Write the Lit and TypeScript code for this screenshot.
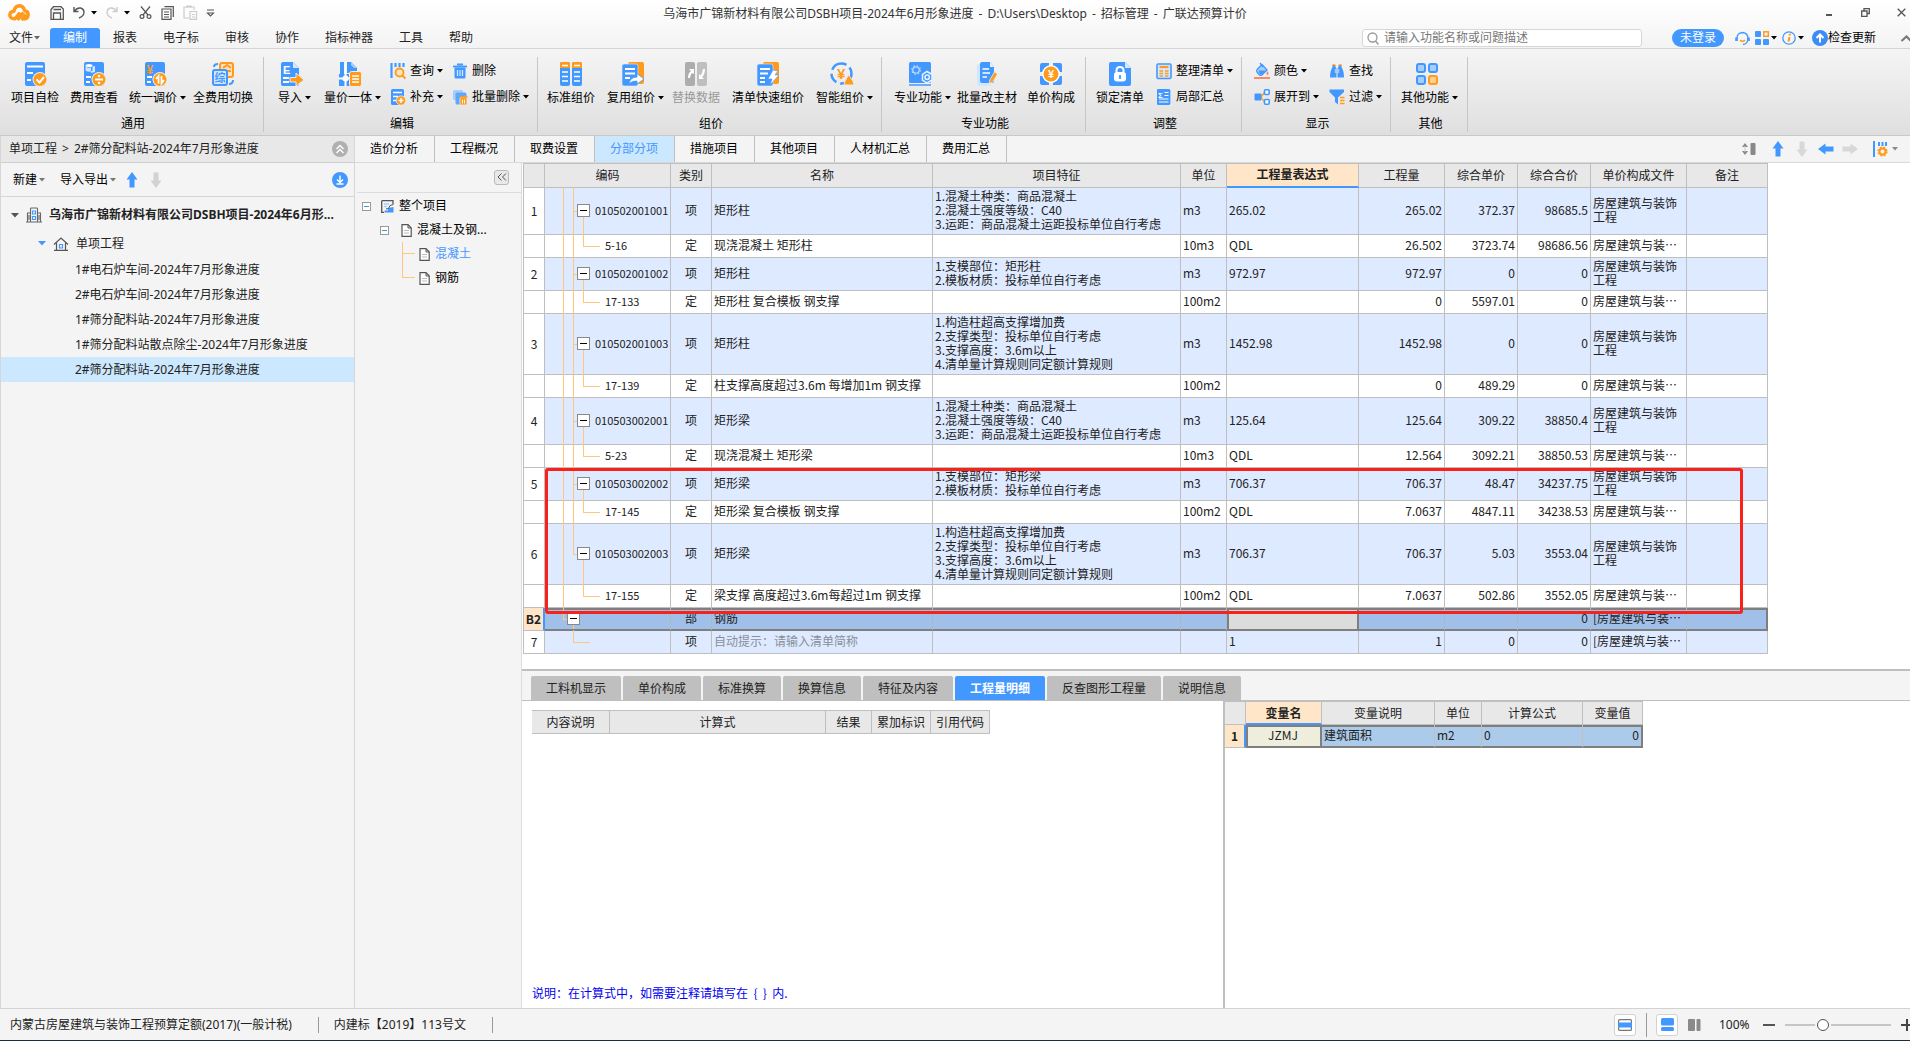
import { LitElement, html, svg, css, nothing, TemplateResult } from "lit";
import { customElement } from "lit/decorators.js";
import { classMap } from "lit/directives/class-map.js";

const B = "#4398ff";
const O = "#ff9a1a";
const L = "#a6cdfb";
const BG = "#ececec";

/* ---------- icons ---------- */
const doc = svg`<rect x="1" y="0" width="20" height="24" rx="2" fill=${B}/>`;
const badge = svg`<circle cx="16" cy="17.5" r="7.5" fill=${BG}/><circle cx="16" cy="17.5" r="6.5" fill=${O}/>`;

const icons: Record<string, TemplateResult> = {
  check: svg`<g transform="translate(1 0)">${doc}<path d="M3 4.5H19M3 11H9M3 18H7" stroke="#fff" stroke-width="2"/>${badge}<path d="M12.500 17.500L15.500 20.500L20 15" fill="none" stroke="#fff" stroke-width="2"/></g>`,
  fee: svg`<g transform="translate(1 0)">${doc}<ellipse cx="6" cy="3.500" rx="3.500" ry="1.500" fill="#fff"/><path d="M2.500 4.500v4q3.500 2.500 7 0v-4q-3.500 2.500 -7 0zM8 5l4-1v6l-4 1z" fill="#cfe4ff"/><path d="M3 15H8M3 20H7" stroke="#fff" stroke-width="2"/>${badge}<path d="M12 17.500h8" stroke="#fff" stroke-width="2"/><circle cx="16" cy="14" r="1.300" fill="#fff"/><circle cx="16" cy="21" r="1.300" fill="#fff"/></g>`,
  adjust: svg`<g transform="translate(1 0)">${doc}<text x="2.500" y="11.500" font-size="12" font-weight="700" fill=${O} font-family="Liberation Sans, sans-serif">¥</text><path d="M3 15H8M3 20H7" stroke="#fff" stroke-width="2"/>${badge}<path d="M14.500 21.500V14L12 17M17.500 14v7.500L20 18" fill="none" stroke="#fff" stroke-width="1.800"/></g>`,
  swap: svg`<rect x="9" y="1" width="13" height="14" rx="2" fill="#ffe2bd" stroke=${O} stroke-width="2"/><path d="M12 6l4-3 4 3M13 9h7" fill="none" stroke=${O} stroke-width="2"/><path d="M3 5q0-3 4-3M22 18q0 4-4 4" fill="none" stroke=${B} stroke-width="2"/><rect x="2" y="8" width="14" height="15" rx="2" fill="#d5e8ff" stroke=${B} stroke-width="2"/><text x="3.500" y="19.500" font-size="11" font-weight="700" fill=${B} font-family="Noto Sans CJK SC, sans-serif">综</text>`,
  import: svg`<path d="M3 0H13L19 6V22q0 2-2 2H3q-2 0-2-2V2q0-2 2-2z" fill=${B}/><path d="M13 0L19 6H13z" fill="#d5e8ff"/><text x="3" y="12" font-size="11" font-weight="700" fill="#fff" font-family="Liberation Sans, sans-serif">E</text><path d="M3 16H9M3 20H9" stroke="#fff" stroke-width="2"/><path d="M10 15.500H16V11L24 18L16 24V20H10z" fill=${O} stroke=${BG} stroke-width="1"/>`,
  unify: svg`<path d="M2 0H6V24H2zM9 0h4l6 6v5H9z" fill=${B}/><path d="M13 0l6 6h-3l-3-3z" fill=${L}/><rect x="1" y="12" width="20" height="12" fill=${B}/><path d="M7.500 0V24M1 16.500H12" stroke="#fff" stroke-width="2"/><circle cx="7.500" cy="16.500" r="3" fill="#fff"/><rect x="11.500" y="9.500" width="12" height="15" rx="2" fill=${O} stroke=${BG}/><path d="M14 14H21M14 17H21M14 20H21" stroke="#fff" stroke-width="1.500"/>`,
  std: svg`<rect x="1" y="0" width="10" height="24" rx="2" fill=${B}/><rect x="13" y="0" width="10" height="24" rx="2" fill=${B}/><path d="M1 6V2q0-2 2-2h6q2 0 2 2V6zM13 6V2q0-2 2-2h6q2 0 2 2V6z" fill=${O}/><path d="M3 3.500H9M15 3.500H21M3 10H9M15 10H21M3 14.500H9M15 14.500H21M3 19H9M15 19H21" stroke="#fff" stroke-width="1.500"/>`,
  reuse: svg`<rect x="7" y="0" width="16" height="22" rx="2" fill=${O}/><rect x="1" y="2" width="16" height="22" rx="2" fill=${B} stroke=${BG} stroke-width=".6"/><path d="M4 7H14M4 11.500H14M4 16H9" stroke="#fff" stroke-width="1.800"/><path d="M8 22q1-7 8-7V11.500L23 17L16 22V19q-5-.5-8 3z" fill="#fff" stroke=${B} stroke-width=".8"/>`,
  replace: svg`<rect x="1" y="0" width="10" height="24" rx="2" fill="#adadad"/><rect x="13" y="0" width="10" height="24" rx="2" fill="#bfbfbf"/><path d="M4 16q0-5 3-7L5 7H10V12L8 11q-2 2-2 5zM21 7q0 5-3 8l2 2H15V12l1.500 1.500q2-2 2.500-6.500z" fill="#fff"/>`,
  quick: svg`<rect x="7" y="0" width="16" height="22" rx="2" fill=${O}/><rect x="1" y="2" width="16" height="22" rx="2" fill=${B} stroke=${BG} stroke-width=".6"/><path d="M4 7H14M4 11.500H12M4 16H9M4 20H9" stroke="#fff" stroke-width="1.800"/><path d="M17 8L22 9L19 13H23L14 23L16 17H12z" fill="#fff" stroke=${B} stroke-width=".6"/>`,
  smart: svg`<circle cx="11.500" cy="11.500" r="10" fill="none" stroke=${B} stroke-width="2.500" stroke-dasharray="17 4 10 4"/><text x="7" y="17" font-size="15" font-weight="700" fill=${O} font-family="Liberation Sans, sans-serif">¥</text><path d="M18.500 13l2 2.500q2.500 3 3.500 6.500q0 1-1 1H15q-1 0-1-1 1-3.500 3-6.500z" fill=${O} stroke=${BG}/>`,
  pro: svg`<rect x="1" y="0" width="22" height="21" rx="1.500" fill=${B}/><path d="M1 23H23" stroke=${B} stroke-width="1.500"/><circle cx="8" cy="8" r="3.200" fill="none" stroke="#b9d9ff" stroke-width="1.300"/><circle cx="8" cy="8" r="4.300" fill="none" stroke="#b9d9ff" stroke-width="1.200" stroke-dasharray="1.500 1.900"/><path d="M19 9.500L24 12.500V18L19 21L14.500 18V12.500z" fill=${B} stroke="#e9f3ff" stroke-width="1.500"/><circle cx="19.200" cy="15.200" r="2.200" fill="none" stroke="#e9f3ff" stroke-width="1.500"/>`,
  material: svg`<rect x="2" y="2" width="14" height="22" rx="2" fill="#cfe6ff"/><path d="M7 0H15L19 5V19q0 2-2 2H7q-2 0-2-2V2q0-2 2-2z" fill=${B}/><path d="M15 0L19 5H15z" fill="#e4f1ff"/><path d="M7.500 7H14M7.500 11H15M7.500 15H12" stroke="#fff" stroke-width="1.600"/><path d="M14 22l1-4.500L19.500 10l3 2-4.500 7.500z" fill=${O} stroke=${BG} stroke-width=".8"/>`,
  compose: svg`<path d="M1 3q0-2 2-2h7v9H1zM23 3q0-2-2-2h-7v9h9zM1 21q0 2 2 2h7v-9H1zM23 21q0 2-2 2h-7v-9h9z" fill=${B}/><circle cx="12" cy="12" r="9" fill="#fff"/><circle cx="12" cy="12" r="7.500" fill=${O}/><text x="8.900" y="16" font-size="11" font-weight="700" fill="#fff" font-family="Liberation Sans, sans-serif">¥</text>`,
  lock: svg`<path d="M3 0H17L23 6V22q0 2-2 2H3q-2 0-2-2V2q0-2 2-2z" fill=${B}/><path d="M17 0L23 6H17z" fill="#d5e8ff"/><path d="M8.500 11V8.500q0-3.500 3.500-3.500t3.500 3.500V11" fill="none" stroke="#fff" stroke-width="2"/><rect x="6" y="10" width="12" height="9.500" rx="3" fill="#fff"/><path d="M12 13v4" stroke=${B} stroke-width="1.800"/>`,
  more: svg`<g stroke-width="2" fill=${L} stroke=${B}><rect x="2" y="2" width="8" height="8" rx="2"/><rect x="14" y="2" width="8" height="8" rx="2"/><rect x="2" y="14" width="8" height="8" rx="2"/></g><rect x="14" y="14" width="8" height="8" rx="2" fill="#ffcf92" stroke=${O} stroke-width="2"/>`,
};

const smallIcons: Record<string, TemplateResult> = {
  query: svg`<path d="M1.500 0v15M5.500 0v4M9.500 0v4M13.500 0v4" stroke=${B} stroke-width="2.200"/><circle cx="9.500" cy="9.500" r="4" fill="#ffe3c0" stroke=${O} stroke-width="1.800"/><path d="M12 12.500l3.500 3" stroke=${O} stroke-width="2"/>`,
  add: svg`<rect x="1" y="0" width="13" height="16" rx="1.500" fill=${B}/><path d="M3 3.500H12M3 7.500H8M3 11.500H6" stroke="#fff" stroke-width="1.500"/><circle cx="11" cy="11.500" r="5" fill=${BG}/><circle cx="11" cy="11.500" r="4.300" fill=${O}/><path d="M11 9v5M8.500 11.500h5" stroke="#fff" stroke-width="1.500"/>`,
  trash: svg`<path d="M1 3.500H15" stroke=${B} stroke-width="1.800"/><path d="M5 1.500H11" stroke=${B} stroke-width="2"/><path d="M2.500 4.500H13.500V14q0 1.500-1.500 1.500H4q-1.500 0-1.500-1.500z" fill=${B}/><path d="M5.500 7v6M8 7v6M10.500 7v6" stroke="#d9eaff" stroke-width="1.200"/>`,
  trashes: svg`<rect x="1" y="1" width="10" height="10" rx="1.500" fill=${L}/><rect x="3.500" y="3.500" width="11" height="12" rx="1.500" fill="#5ea8fb"/><rect x="8" y="8.500" width="7" height="7.500" rx="1" fill=${O} stroke=${BG} stroke-width=".8"/><path d="M7.500 8H15.500" stroke=${O} stroke-width="1.500"/><path d="M10.500 10.500v4M12.500 10.500v4" stroke="#fff" stroke-width=".9"/>`,
  tidy: svg`<rect x="1" y="1" width="14" height="14.500" rx="1" fill="#d3e7ff" stroke=${B} stroke-width="1.600"/><path d="M3.500 4H12.500" stroke=${O} stroke-width="2.200"/><path d="M3.500 8H7M3.500 10.500H7M3.500 13H7M9 8H12.500M9 10.500H12.500M9 13H12.500" stroke=${O} stroke-width="1.300"/>`,
  sum: svg`<rect x="1" y="0" width="13" height="16" rx="1" fill=${B}/><path d="M14.500 1v14" stroke=${L} stroke-width="1"/><text x="2" y="8.500" font-size="8" font-weight="700" fill="#fff" font-family="Liberation Sans, sans-serif">Σ</text><path d="M8.500 3.500H12.500M8.500 6.500H12.500M3 10H12.500M3 13H12.500" stroke="#fff" stroke-width="1.200"/>`,
  color: svg`<path d="M3.500 6L8 1.500L13 7L8 12Q6.500 13 5 11.500L3 9Q2 7.500 3.500 6z" fill=${L} stroke=${B} stroke-width="1.300"/><path d="M4.500 7.500H12L8 11.500H6z" fill=${B}/><path d="M6 0l3 4" stroke=${B} stroke-width="1.300"/><path d="M13.500 8q2 3 0 4-2-1 0-4z" fill="#ff7d55"/><path d="M0 15H16" stroke="#ff7d55" stroke-width="1.800"/>`,
  find: svg`<path d="M3.500 2H6.500V4l1 1.500V14.500H1Q1 8 3.500 4zM12.500 2H9.500V4l-1 1.500V14.500H15Q15 8 12.500 4z" fill=${B}/><path d="M5.800 6h4.400v4h-4.400z" fill=${L}/><path d="M3.300 2h3M9.700 2h3" stroke=${O} stroke-width="1.500"/>`,
  expand: svg`<path d="M7 8L10.500 3.500M7 8L10.500 13" stroke=${O} stroke-width="1.300"/><rect x="0.500" y="4.500" width="7" height="7" rx="1" fill=${B}/><rect x="10.500" y="0.800" width="4.700" height="4.700" rx="1" fill="#fff" stroke=${B} stroke-width="1.600"/><rect x="10.500" y="10.500" width="4.700" height="4.700" rx="1" fill="#fff" stroke=${B} stroke-width="1.600"/>`,
  filter: svg`<path d="M0.500 0.500H15V3L9 8.500V15.500L6 13V8.500L0.500 3z" fill=${B}/><path d="M11 8.500H15.500M11 11.500H15.500M11 14.500H15.500" stroke=${O} stroke-width="1.500"/>`,
};

const big = (k: string) => html`<svg class="i24" viewBox="0 0 24 24" aria-hidden="true">${icons[k]}</svg>`;
const small = (k: string) => html`<svg class="i16" viewBox="0 0 16 16" aria-hidden="true">${smallIcons[k]}</svg>`;
const icon = (w: number, h: number, body: unknown) =>
  html`<svg width=${w} height=${h} viewBox="0 0 ${w} ${h}" fill="none" aria-hidden="true">${body}</svg>`;
const caret = html`<svg class="caret" width="6" height="4" viewBox="0 0 6 4" aria-hidden="true"><path d="M0 0H6L3 3.500z" fill="currentColor"/></svg>`;

const arrowShape = (dir: number, color: string) =>
  icon(16, 16, svg`<path transform="rotate(${dir} 8 8)" d="M8 0L13.500 7.500H10.500V15.500H5.500V7.500H2.500z" fill=${color}/>`);
const sheet = icon(11, 13, svg`<path d="M1 .700H7L10.200 4V12.300H1z" fill="#fff" stroke="#555" stroke-width="1.200"/><path d="M7 .700V4h3.200" stroke="#555"/><path d="M3 6.500H8M3 9H8" stroke="#bbb"/>`);

/* ---------- data ---------- */
type Btn = { t: string; i: string; a?: boolean; off?: boolean };
type Group = { name: string; cls: string; large: Btn[]; cols: Btn[][] };

const groups: Group[] = [
  { name: "通用", cls: "g1", large: [{ t: "项目自检", i: "check" }, { t: "费用查看", i: "fee" }, { t: "统一调价", i: "adjust", a: true }, { t: "全费用切换", i: "swap" }], cols: [] },
  { name: "编辑", cls: "g2", large: [{ t: "导入", i: "import", a: true }, { t: "量价一体", i: "unify", a: true }], cols: [[{ t: "查询", i: "query", a: true }, { t: "补充", i: "add", a: true }], [{ t: "删除", i: "trash" }, { t: "批量删除", i: "trashes", a: true }]] },
  { name: "组价", cls: "g3", large: [{ t: "标准组价", i: "std" }, { t: "复用组价", i: "reuse", a: true }, { t: "替换数据", i: "replace", off: true }, { t: "清单快速组价", i: "quick" }, { t: "智能组价", i: "smart", a: true }], cols: [] },
  { name: "专业功能", cls: "g4", large: [{ t: "专业功能", i: "pro", a: true }, { t: "批量改主材", i: "material" }, { t: "单价构成", i: "compose" }], cols: [] },
  { name: "调整", cls: "g5", large: [{ t: "锁定清单", i: "lock" }], cols: [[{ t: "整理清单", i: "tidy", a: true }, { t: "局部汇总", i: "sum" }]] },
  { name: "显示", cls: "g6", large: [], cols: [[{ t: "颜色", i: "color", a: true }, { t: "展开到", i: "expand", a: true }], [{ t: "查找", i: "find" }, { t: "过滤", i: "filter", a: true }]] },
  { name: "其他", cls: "g7", large: [{ t: "其他功能", i: "more", a: true }], cols: [] },
];

const menus = ["编制", "报表", "电子标", "审核", "协作", "指标神器", "工具", "帮助"];
const tabs = ["造价分析", "工程概况", "取费设置", "分部分项", "措施项目", "其他项目", "人材机汇总", "费用汇总"];
const lowerTabs = ["工料机显示", "单价构成", "标准换算", "换算信息", "特征及内容", "工程量明细", "反查图形工程量", "说明信息"];
const columns: [string, number][] = [["", 22], ["编码", 126], ["类别", 41], ["名称", 221], ["项目特征", 248], ["单位", 46], ["工程量表达式", 132], ["工程量", 86], ["综合单价", 73], ["综合合价", 73], ["单价构成文件", 96], ["备注", 81]];

type Row = { n: string; code: string; kind: string; name: string; feat: string[]; v: string[] };
const F = "房屋建筑与装饰工程";
const S = "房屋建筑与装…";
const concrete = ["1.混凝土种类：商品混凝土", "2.混凝土强度等级：C40", "3.运距：商品混凝土运距投标单位自行考虑"];
const tall = ["1.构造柱超高支撑增加费", "2.支撑类型：投标单位自行考虑", "3.支撑高度：3.6m以上", "4.清单量计算规则同定额计算规则"];
const rows: Row[] = [
  { n: "1", code: "010502001001", kind: "项", name: "矩形柱", feat: concrete, v: ["m3", "265.02", "265.02", "372.37", "98685.5", F] },
  { n: "", code: "5-16", kind: "定", name: "现浇混凝土 矩形柱", feat: [], v: ["10m3", "QDL", "26.502", "3723.74", "98686.56", S] },
  { n: "2", code: "010502001002", kind: "项", name: "矩形柱", feat: ["1.支模部位：矩形柱", "2.模板材质：投标单位自行考虑"], v: ["m3", "972.97", "972.97", "0", "0", F] },
  { n: "", code: "17-133", kind: "定", name: "矩形柱 复合模板 钢支撑", feat: [], v: ["100m2", "", "0", "5597.01", "0", S] },
  { n: "3", code: "010502001003", kind: "项", name: "矩形柱", feat: tall, v: ["m3", "1452.98", "1452.98", "0", "0", F] },
  { n: "", code: "17-139", kind: "定", name: "柱支撑高度超过3.6m 每增加1m 钢支撑", feat: [], v: ["100m2", "", "0", "489.29", "0", S] },
  { n: "4", code: "010503002001", kind: "项", name: "矩形梁", feat: concrete, v: ["m3", "125.64", "125.64", "309.22", "38850.4", F] },
  { n: "", code: "5-23", kind: "定", name: "现浇混凝土 矩形梁", feat: [], v: ["10m3", "QDL", "12.564", "3092.21", "38850.53", S] },
  { n: "5", code: "010503002002", kind: "项", name: "矩形梁", feat: ["1.支模部位：矩形梁", "2.模板材质：投标单位自行考虑"], v: ["m3", "706.37", "706.37", "48.47", "34237.75", F] },
  { n: "", code: "17-145", kind: "定", name: "矩形梁 复合模板 钢支撑", feat: [], v: ["100m2", "QDL", "7.0637", "4847.11", "34238.53", S] },
  { n: "6", code: "010503002003", kind: "项", name: "矩形梁", feat: tall, v: ["m3", "706.37", "706.37", "5.03", "3553.04", F] },
  { n: "", code: "17-155", kind: "定", name: "梁支撑 高度超过3.6m每超过1m 钢支撑", feat: [], v: ["100m2", "QDL", "7.0637", "502.86", "3552.05", S] },
  { n: "B2", code: "", kind: "部", name: "钢筋", feat: [], v: ["", "", "", "", "0", "[" + S] },
  { n: "7", code: "", kind: "项", name: "自动提示：请输入清单简称", feat: [], v: ["", "1", "1", "0", "0", "[" + S] },
];

const base = css`
  *, *::before, *::after { box-sizing: border-box; }
  button, input { font: inherit; color: inherit; margin: 0; }
  button { border: 0; padding: 0; background: none; white-space: nowrap; display: flex; align-items: center; }
  a { color: inherit; text-decoration: none; }
  svg { display: block; flex: none; overflow: visible; }
  .caret { margin-left: 3px; }
`;

/* ---------- header: title bar, menu and ribbon ---------- */
@customElement("app-header")
export class AppHeader extends LitElement {
  static styles = [base, css`
    :host { display: block; flex: none; background: linear-gradient(#fff, #f3f3f3 49px); }
    .title { display: grid; grid-template-columns: 1fr auto 1fr; align-items: center; height: 28px; }
    .title h1 { display: flex; gap: 5px; margin: 0; font-size: 12px; font-weight: 400; color: #333; white-space: nowrap; }
    .quick { display: flex; align-items: center; padding: 0 0 3px 8px; color: #555; }
    .quick .logo { margin-right: 20px; }
    .quick button { margin-right: 9px; }
    .quick .caret { margin-left: 6px; color: #000; }
    .faint { color: #ccc; }
    .win { display: flex; justify-content: flex-end; gap: 27px; padding: 0 4px 3px 0; color: #555; }
    .menu { display: flex; align-items: center; height: 20px; }
    .menu nav { display: flex; height: 20px; }
    .menu nav button { padding: 0 13px; height: 20px; color: #222; }
    .menu nav .file { width: 50px; padding: 0 0 0 9px; }
    .menu nav .file .caret { margin-left: 1px; color: #666; }
    .menu nav .on { background: #4398ff; color: #fff; border-radius: 3px 3px 0 0; }
    .right { margin-left: auto; display: flex; align-items: center; }
    .search { display: flex; align-items: center; gap: 5px; width: 280px; height: 18px; margin-right: 30px; padding-left: 4px; background: #fff; border: 1px solid #d6d6d6; border-radius: 3px; }
    .search input { flex: 1; min-width: 0; border: 0; padding: 0; outline: 0; background: none; color: #444; height: 16px; }
    .search input::placeholder { color: #777; opacity: 1; }
    .login { background: #4398ff; color: #fff; border-radius: 9px; height: 18px; padding: 0 8px; margin-right: 11px; }
    .tool { margin-right: 5px; }
    .tool .caret { margin-left: 2px; }
    .update { margin: 0 25px 0 3px; color: #000; }
    .ribbon { display: flex; height: 88px; background: linear-gradient(#f5f5f5, #dfdfdf); border-top: 1px solid #d4d4d4; border-bottom: 1px solid #c9c9c9; color: #000; }
    .group { position: relative; display: flex; flex-direction: column; }
    .group::after { content: ""; position: absolute; right: 0; top: 8px; bottom: 3px; width: 1px; background: #c6c6c6; }
    .group h2 { margin: 0; font-size: 12px; line-height: 16px; font-weight: 400; text-align: center; padding: 4px 0 0 2px; }
    .cmds { display: flex; height: 63px; padding-top: 13px; }
    .large { flex-direction: column; padding: 0 5px; gap: 4px; height: 44px; }
    .large.arrow { padding-right: 1px; }
    .large.arrow .i24 { margin-right: 5px; }
    .large .lab, .mini .lab { display: flex; align-items: center; line-height: 16px; }
    .mini { gap: 4px; height: 18px; }
    .col { display: flex; flex-direction: column; gap: 8px; padding: 0 1px; align-items: flex-start; }
    .off { color: #999; }
    .i24 { width: 24px; height: 24px; }
    .i16 { width: 16px; height: 16px; }
    .g1 { width: 264px; } .g1 .cmds { padding-left: 6px; gap: 1px; }
    .g2 { width: 274px; } .g2 .cmds { padding-left: 9px; gap: 7px; }
    .g3 { width: 344px; } .g3 .cmds { padding-left: 4px; gap: 2px; }
    .g4 { width: 204px; } .g4 .cmds { padding-left: 7px; }
    .g5 { width: 156px; } .g5 .cmds { padding-left: 5px; gap: 6px; }
    .g6 { width: 149px; } .g6 .cmds { padding-left: 11px; gap: 8px; }
    .g7 { width: 77px; } .g7 .cmds { padding-left: 5px; }
  `];

  render() {
    return html`
      <div class="title">
        <div class="quick">
          <svg class="logo" width="22" height="17" viewBox="0 0 22 17" fill="none" stroke=${O} stroke-width="3.4" stroke-linejoin="round" aria-hidden="true"><path d="M12 8.500L7 14.800Q2 15 1.800 11Q2 7.500 6 7.300Q7 2 11.500 1.800Q15.500 2 16.500 6.500Q20.300 7.300 20.200 11Q19.800 15 14.500 15L18 10.500"/><path d="M9.500 16L15.500 8.500"/></svg>
          <button aria-label="保存">${icon(14, 14, svg`<path d="M1 3.500L3.500 .700H11L13.300 3V13.300H1zM3.500 3.500H11M3.500 13V7H10.500V13" stroke="currentColor" stroke-width="1.300"/>`)}</button>
          <button aria-label="撤销">${icon(12, 13, svg`<path d="M1 1V5.500H5.500M1.500 5Q4 1.500 7.500 2Q11 3 11 6.500Q10.500 10.500 6 12" stroke="currentColor" stroke-width="1.400"/>`)}${caret}</button>
          <button aria-label="恢复"><span class="faint">${icon(12, 13, svg`<path d="M11 1V5.500H6.500M10.500 5Q8 1.500 4.500 2Q1 3 1 6.500Q1.500 10.500 6 12" stroke="currentColor" stroke-width="1.400"/>`)}</span>${caret}</button>
          <button aria-label="剪切">${icon(13, 13, svg`<circle cx="3" cy="10.500" r="1.900" stroke="currentColor" stroke-width="1.200"/><circle cx="10" cy="10.500" r="1.900" stroke="currentColor" stroke-width="1.200"/><path d="M2 .500L9 9M11 .500L4 9" stroke="currentColor" stroke-width="1.200"/>`)}</button>
          <button aria-label="复制">${icon(13, 14, svg`<path d="M3.500 .700H12.300V11M1 3H10V13.300H1z" stroke="currentColor" stroke-width="1.200"/><path d="M3 6H8M3 8.500H8M3 11H8" stroke="currentColor"/>`)}</button>
          <button aria-label="粘贴" class="faint">${icon(15, 15, svg`<path d="M6 13H1V2H11V5M4 3V1H8V3M7 6.500H13.500V14.300H7zM9 9.500H12M9 12H12" stroke="currentColor" stroke-width="1.200"/>`)}</button>
          <button aria-label="自定义">${icon(7, 8, svg`<path d="M0 1H7M.500 4L3.500 7L6.500 4z" stroke="currentColor" stroke-width="1.100"/>`)}</button>
        </div>
        <h1><span>乌海市广锦新材料有限公司DSBH项目-2024年6月形象进度</span><span>-</span><span>D:\\Users\\Desktop</span><span>-</span><span>招标管理</span><span>-</span><span>广联达预算计价</span></h1>
        <div class="win">
          <button aria-label="最小化">${icon(9, 9, svg`<path d="M1 7H7" stroke="currentColor" stroke-width="2"/>`)}</button>
          <button aria-label="还原">${icon(9, 9, svg`<path d="M3 3V.700H8.300V5.500H6M.700 3H6V8.300H.700z" stroke="currentColor" stroke-width="1.300"/>`)}</button>
          <button aria-label="关闭">${icon(9, 9, svg`<path d="M.700 .700L8.300 8.300M8.300 .700L.700 8.300" stroke="currentColor" stroke-width="1.300"/>`)}</button>
        </div>
      </div>
      <div class="menu">
        <nav>
          <button class="file">文件${caret}</button>
          ${menus.map((m, i) => html`<button class=${i ? "" : "on"}>${m}</button>`)}
        </nav>
        <div class="right">
          <div class="search">
            ${icon(12, 13, svg`<circle cx="5.500" cy="5.500" r="4.500" stroke="#999" stroke-width="1.300"/><path d="M8.500 9L11.500 12.500" stroke="#999" stroke-width="1.400"/>`)}
            <input type="text" aria-label="搜索" placeholder="请输入功能名称或问题描述">
          </div>
          <button class="login">未登录</button>
          <button class="tool" aria-label="客服">${icon(15, 15, svg`<path d="M2 8Q1.500 2 7.500 1.500Q13.500 2 13 8Q12.500 13 8 13.500" stroke=${B} stroke-width="1.400"/><path d="M1.500 6.500V10M13.500 6.500V10" stroke=${B} stroke-width="2.600"/><path d="M5 9Q7.500 11.500 10 9" stroke=${O} stroke-width="1.600"/>`)}</button>
          <button class="tool" aria-label="应用">${icon(14, 14, svg`<rect width="6" height="6" rx="1" fill=${B}/><rect y="8" width="6" height="6" rx="1" fill=${B}/><rect x="8" y="8" width="6" height="6" rx="1" fill=${B}/><rect x="8.800" y=".800" width="4.500" height="4.500" stroke=${O} stroke-width="1.500"/>`)}${caret}</button>
          <button class="tool" aria-label="信息">${icon(14, 14, svg`<circle cx="7" cy="7" r="6.200" stroke=${B} stroke-width="1.300"/><path d="M7.500 6L6.500 10.500" stroke=${O} stroke-width="2"/><circle cx="7.800" cy="3.700" r="1.100" fill=${O}/>`)}${caret}</button>
          <button class="update">${icon(16, 16, svg`<circle cx="8" cy="8" r="8" fill="#3d8bf5"/><path d="M8 12.500V5M4.500 8L8 4.500L11.500 8" stroke="#fff" stroke-width="2"/>`)}检查更新</button>
          <button aria-label="折叠功能区">${icon(9, 7, svg`<path d="M.500 6L5.500 1.500L10 6" stroke="#777" stroke-width="2"/>`)}</button>
        </div>
      </div>
      <div class="ribbon">
        ${groups.map((g) => html`
          <section class="group ${g.cls}">
            <div class="cmds">
              ${g.large.map((b) => html`<button class=${classMap({ large: true, arrow: !!b.a, off: !!b.off })}>${big(b.i)}<span class="lab">${b.t}${b.a ? caret : nothing}</span></button>`)}
              ${g.cols.map((c) => html`<div class="col">${c.map((b) => html`<button class="mini">${small(b.i)}<span class="lab">${b.t}${b.a ? caret : nothing}</span></button>`)}</div>`)}
            </div>
            <h2>${g.name}</h2>
          </section>`)}
      </div>`;
  }
}

/* ---------- left: project explorer ---------- */
@customElement("project-panel")
export class ProjectPanel extends LitElement {
  static styles = [base, css`
    :host { display: block; flex: none; width: 355px; border: solid #d6d6d6; border-width: 0 1px; color: #222; }
    .crumb { display: flex; gap: 5px; align-items: center; height: 27px; padding: 0 6px 0 8px; background: #e8e8e8; border-bottom: 1px solid #d0d0d0; }
    .crumb button { margin-left: auto; }
    .bar { display: flex; align-items: center; height: 34px; padding: 0 6px 0 12px; border-bottom: 1px solid #d6d6d6; color: #000; }
    .bar button { margin-right: 8px; }
    .bar .new { margin-right: 15px; }
    .bar .caret { margin-left: 2px; color: #777; }
    .bar .down { margin: 0 0 0 auto; }
    ul { list-style: none; margin: 0; padding: 3px 0 0; }
    li { display: flex; align-items: center; height: 25px; padding-left: 74px; white-space: nowrap; }
    li.root { height: 30px; padding-left: 10px; gap: 7px; font-weight: 700; }
    li.unit { height: 27px; padding-left: 37px; gap: 8px; }
    li.sel { background: #cce8ff; }
  `];
  render() {
    const leaves = ["1#电石炉车间-2024年7月形象进度", "2#电石炉车间-2024年7月形象进度", "1#筛分配料站-2024年7月形象进度", "1#筛分配料站散点除尘-2024年7月形象进度", "2#筛分配料站-2024年7月形象进度"];
    return html`
      <div class="crumb"><span>单项工程</span><span>&gt;</span><span>2#筛分配料站-2024年7月形象进度</span>
        <button aria-label="收起">${icon(16, 16, svg`<circle cx="8" cy="8" r="8" fill="#b0b0b0"/><path d="M4.500 8L8 4.500L11.500 8M4.500 12L8 8.500L11.500 12" stroke="#fff" stroke-width="1.400"/>`)}</button></div>
      <div class="bar">
        <button class="new">新建${caret}</button><button>导入导出${caret}</button>
        <button aria-label="上移">${arrowShape(0, B)}</button><button aria-label="下移">${arrowShape(180, "#d2d2d2")}</button>
        <button class="down" aria-label="下载">${icon(16, 16, svg`<circle cx="8" cy="8" r="8" fill=${B}/><path d="M8 3.500V10M5 7.500L8 10.500L11 7.500M4.500 12H11.500" stroke="#fff" stroke-width="1.400"/>`)}</button>
      </div>
      <ul>
        <li class="root">${icon(8, 5, svg`<path d="M0 0H8L4 4.500z" fill="#555"/>`)}
          ${icon(16, 16, svg`<path d="M0 15H16M1.500 15V6H4.500M14.500 15V6H11.500M4.500 15V1.700Q4.500 1 5.500 1H10.500Q11.500 1 11.500 1.700V15M3 8v5M13 8v5" stroke="#666" stroke-width="1.100"/><path d="M6.500 4H9.500V7H6.500zM6.500 9.500H9.500V12.500H6.500z" stroke=${B} stroke-width="1.200"/>`)}
          <span>乌海市广锦新材料有限公司DSBH项目-2024年6月形...</span></li>
        <li class="unit">${icon(8, 5, svg`<path d="M0 0H8L4 4.500z" fill=${B}/>`)}
          ${icon(14, 14, svg`<path d="M0 7.500L7 1L14 7.500M2.500 6V13.300H11.500V6M0 13.300H14" stroke="#555" stroke-width="1.200"/><path d="M5.500 7.500H8.500V11H5.500z" stroke=${B} stroke-width="1.200"/>`)}
          <span>单项工程</span></li>
        ${leaves.map((t, i) => html`<li class=${i === 4 ? "sel" : ""}>${t}</li>`)}
      </ul>`;
  }
}

/* ---------- section tree ---------- */
@customElement("section-tree")
export class SectionTree extends LitElement {
  static styles = [base, css`
    :host { display: block; flex: none; width: 167px; border-right: 1px solid #dcdcdc; color: #000; }
    .bar { display: flex; justify-content: flex-end; align-items: center; height: 30px; margin-left: 2px; padding: 0 12px 1px 0; border-bottom: 1px solid #dcdcdc; }
    .bar button { justify-content: center; width: 15px; height: 15px; border: 1px solid #b9b9b9; border-radius: 3px; background: #e9e9e9; }
    ul { list-style: none; margin: 0; padding: 1px 0 0; }
    li { position: relative; display: flex; align-items: center; gap: 5px; height: 24px; padding-left: 64px; }
    .l0 { padding-left: 7px; }
    .l1 { padding-left: 25px; }
    .l0 button { margin-right: 5px; }
    .l1 button { margin-right: 7px; }
    .leaf::before { content: ""; position: absolute; left: 47px; top: 0; width: 13px; height: 12px; border: solid #ffc67c; border-width: 0 0 1px 1px; }
    .leaf + .leaf::before { top: -12px; height: 24px; }
    .on { color: #4398ff; }
  `];
  render() {
    const box = html`<button aria-label="折叠节点">${icon(9, 9, svg`<rect x=".500" y=".500" width="8" height="8" fill="#fff" stroke="#999"/><path d="M2 4.500H7" stroke="#3a9ac8"/>`)}</button>`;
    return html`
      <div class="bar"><button aria-label="收起导航">${icon(10, 8, svg`<path d="M4.500 .500L1 4L4.500 7.500M9 .500L5.500 4L9 7.500" stroke="#555"/>`)}</button></div>
      <ul>
        <li class="l0">${box}${icon(13, 13, svg`<path d="M.700 .700H12V4M.700 .700V12.300H3" stroke="#555" stroke-width="1.300"/><path d="M3 4H8M3 6.500H6" stroke=${L} stroke-width="1.500"/><path d="M3.500 12.500V10.500H7V8L12.500 7V12.500z" fill=${B}/><path d="M5 9L7.500 8.500L9 5.500L12.500 4.500" stroke="#555"/>`)}<span>整个项目</span></li>
        <li class="l1">${box}${sheet}<span>混凝土及钢...</span></li>
        <li class="leaf on">${sheet}<span>混凝土</span></li>
        <li class="leaf">${sheet}<span>钢筋</span></li>
      </ul>`;
  }
}

/* ---------- bill of quantities grid ---------- */
@customElement("quantity-grid")
export class QuantityGrid extends LitElement {
  static styles = [base, css`
    :host { display: block; flex: none; padding: 0 0 15px 1px; background: #fff; color: #222; font-family: "Noto Sans CJK SC", sans-serif; }
    .wrap { position: relative; width: max-content; }
    table { border-collapse: separate; border-spacing: 0; table-layout: fixed; width: 1px; line-height: 14px; }
    th, td { border: solid #bfbfbf; border-width: 0 1px 1px 0; padding: 1px 2px 3px; font-weight: 400; text-align: left; height: 23px; overflow: hidden; }
    thead th { height: 25px; border-top-width: 1px; background: #e8e8e8; text-align: center; white-space: nowrap; }
    tr > :first-child { border-left-width: 1px; text-align: center; padding: 2px 0; }
    thead .act { background: #ffe6c8; font-weight: 700; border-bottom: 2px solid #4398ff; }
    .item td { background: #deeaff; }
    .mid { text-align: center; }
    .num { text-align: right; }
    .one { white-space: nowrap; }
    td.code { position: relative; padding-left: 50px; font-size: 11px; white-space: nowrap; overflow: visible; }
    .quota td.code { padding-left: 60px; }
    .ln { position: absolute; width: 0; border-left: 1px solid #ffc67c; top: -1px; bottom: 0; }
    .hn { position: absolute; height: 0; border-top: 1px solid #ffc67c; top: 50%; }
    .a { left: 18px; } .b { left: 28px; } .c { left: 38px; }
    .half { bottom: 50%; }
    .lower { top: 50%; }
    .hb { left: 28px; width: 5px; }
    .hc { left: 38px; width: 17px; }
    .ha { left: 18px; width: 5px; }
    .h7 { left: 28px; width: 17px; }
    .box { position: absolute; left: 32px; top: 50%; margin-top: -7px; width: 13px; height: 13px; border: 1px solid #888; background: #fff; }
    .box::after { content: ""; position: absolute; left: 2px; right: 2px; top: 5px; border-top: 1px solid #000; }
    .box.up { left: 22px; }
    .cur th { background: #ffe6c8; font-weight: 700; border-right: 2px solid #4398ff; }
    .cur td { background: #a0c0ea; border-right-color: #a9b9cc; box-shadow: inset 0 2px #7f7f7f; border-bottom: 2px solid #7f7f7f; }
    .cur td:last-child { border-right: 2px solid #7f7f7f; }
    .cur td.edit { background: #dcdcdc; border-right: 2px solid #7f7f7f; box-shadow: inset 2px 2px #7f7f7f; }
    .hint { color: #888f99; }
    .mark { position: absolute; left: 22px; top: 305px; width: 1198px; height: 146px; border: 3px solid #f9221a; border-radius: 3px; pointer-events: none; }
  `];

  private tree(r: Row, i: number) {
    if (r.n === "B2") return html`<i class="ln a half"></i><i class="hn ha"></i><i class="ln b lower"></i><button class="box up" aria-label="折叠"></button>`;
    if (r.n === "7") return html`<i class="ln b half"></i><i class="hn h7"></i>`;
    if (r.kind === "项") return html`<i class="ln a"></i><i class="ln b ${i === 10 ? "half" : ""}"></i><i class="hn hb"></i><i class="ln c lower"></i><button class="box" aria-label="折叠"></button>`;
    return html`<i class="ln a"></i>${i === 11 ? nothing : html`<i class="ln b"></i>`}<i class="ln c half"></i><i class="hn hc"></i>`;
  }

  render() {
    return html`<div class="wrap">
      <table>
        <colgroup>${columns.map((c) => html`<col width=${c[1]}>`)}</colgroup>
        <thead><tr>${columns.map((c) => html`<th scope="col" class=${c[0] === "工程量表达式" ? "act" : ""}>${c[0]}</th>`)}</tr></thead>
        <tbody>${rows.map((r, i) => html`
          <tr class=${r.n === "B2" ? "cur" : r.kind === "项" ? "item" : "quota"}>
            <th scope="row">${r.n}</th>
            <td class="code">${this.tree(r, i)}${r.code}</td>
            <td class="mid">${r.kind}</td>
            <td class="one ${r.n === "7" ? "hint" : ""}">${r.name}</td>
            <td class="one">${r.feat.map((f) => html`<div>${f}</div>`)}</td>
            <td>${r.v[0]}</td>
            <td class="edit">${r.v[1]}</td>
            <td class="num">${r.v[2]}</td>
            <td class="num">${r.v[3]}</td>
            <td class="num">${r.v[4]}</td>
            <td class=${r.v[5] === F ? "" : "one"}>${r.v[5]}</td>
            <td></td>
          </tr>`)}</tbody>
      </table>
      <div class="mark"></div>
    </div>`;
  }
}

/* ---------- lower detail pane ---------- */
@customElement("detail-pane")
export class DetailPane extends LitElement {
  static styles = [base, css`
    :host { display: flex; flex-direction: column; flex: 1; min-height: 0; border-top: 2px solid #bfbfbf; color: #222; font-family: "Noto Sans CJK SC", sans-serif; }
    .tabs { display: flex; gap: 2px; padding: 5px 0 0 9px; border-bottom: 1px solid #bfbfbf; background: #f4f4f4; }
    .tabs button { height: 24px; padding: 0 15px; background: #bfbfbf; border-radius: 2px 2px 0 0; }
    .tabs .on { background: #4398ff; color: #fff; font-weight: 700; }
    .panes { flex: 1; display: grid; grid-template-columns: 701fr 687fr; background: #fff; }
    .left { display: flex; flex-direction: column; justify-content: space-between; align-items: flex-start; padding: 9px 0 5px 10px; }
    .right { border-left: 2px solid #bfbfbf; }
    .note { margin: 0; color: #0000f0; line-height: 20px; }
    table { border-collapse: separate; border-spacing: 0; table-layout: fixed; width: 1px; line-height: 14px; }
    th, td { border: solid #bfbfbf; border-width: 0 1px 1px 0; height: 23px; padding: 2px; font-weight: 400; text-align: left; white-space: nowrap; }
    thead th { background: #e8e8e8; text-align: center; }
    .left thead th { height: 24px; border-top-width: 1px; padding: 2px 0; }
    .right thead th { height: 24px; border-top-width: 1px; }
    thead th.act, tbody th { background: #ffe6c8; font-weight: 700; }
    thead th.act { border-bottom: 2px solid #4398ff; }
    tbody th { text-align: center; border-right: 2px solid #4398ff; }
    td { background: #accbea; border-bottom: 2px solid #7f7f7f; box-shadow: inset 0 2px #7f7f7f; padding: 1px 2px 3px; }
    td.name { text-align: center; background: #efeedd; border-right: 2px solid #7f7f7f; box-shadow: inset 2px 2px #7f7f7f; }
    td:last-child { text-align: right; border-right: 2px solid #7f7f7f; }
  `];
  render() {
    const left: [string, number][] = [["内容说明", 78], ["计算式", 216], ["结果", 46], ["累加标识", 59], ["引用代码", 59]];
    const right: [string, number][] = [["", 21], ["变量名", 76], ["变量说明", 113], ["单位", 47], ["计算公式", 101], ["变量值", 60]];
    return html`
      <div class="tabs">${lowerTabs.map((t) => html`<button class=${t === "工程量明细" ? "on" : ""}>${t}</button>`)}</div>
      <div class="panes">
        <div class="left">
          <table><colgroup>${left.map((c) => html`<col width=${c[1]}>`)}</colgroup>
            <thead><tr>${left.map((c) => html`<th scope="col">${c[0]}</th>`)}</tr></thead></table>
          <p class="note">说明：在计算式中，如需要注释请填写在&nbsp; { &nbsp;} &nbsp;内.</p>
        </div>
        <div class="right">
          <table><colgroup>${right.map((c) => html`<col width=${c[1]}>`)}</colgroup>
            <thead><tr>${right.map((c) => html`<th scope="col" class=${c[0] === "变量名" ? "act" : ""}>${c[0]}</th>`)}</tr></thead>
            <tbody><tr><th scope="row">1</th><td class="name">JZMJ</td><td>建筑面积</td><td>m2</td><td>0</td><td>0</td></tr></tbody></table>
        </div>
      </div>`;
  }
}

/* ---------- status bar ---------- */
@customElement("status-bar")
export class StatusBar extends LitElement {
  static styles = [base, css`
    :host { display: flex; align-items: center; flex: none; height: 33px; padding-left: 10px; background: #f4f4f4; border-top: 1px solid #d2d2d2; border-bottom: 1px solid #1c2c44; color: #222; }
    .sep { width: 1px; height: 16px; background: #999; margin: 0 15px 0 26px; }
    .right { margin-left: auto; display: flex; align-items: center; }
    .view { width: 22px; height: 22px; justify-content: center; border: 1px solid transparent; border-radius: 3px; }
    .boxed { background: #fff; border-color: #d2d2d2; }
    .bar { width: 1px; height: 24px; background: #999; margin: 0 9px 0 10px; }
    .pct { margin: 0 9px 0 14px; width: 35px; }
    .plain { margin-left: 5px; }
    input { appearance: none; width: 106px; height: 16px; margin: 0 10px; background: linear-gradient(#c6c6c6, #c6c6c6) center / 100% 2px no-repeat; }
    input::-webkit-slider-thumb { appearance: none; width: 12px; height: 12px; border: 1px solid #555; border-radius: 50%; background: #fff; box-shadow: 0 0 0 2px #f4f4f4; }
  `];
  render() {
    return html`
      <span>内蒙古房屋建筑与装饰工程预算定额(2017)(一般计税)</span><i class="sep"></i>
      <span>内建标【2019】113号文</span><i class="sep"></i>
      <div class="right">
        <button class="view boxed" aria-label="整页">${icon(14, 12, svg`<rect x=".600" y=".600" width="12.800" height="10.800" rx="1" stroke="#777" stroke-width="1.200"/><rect y="3.500" width="14" height="5" fill=${B}/>`)}</button>
        <i class="bar"></i>
        <button class="view boxed" aria-label="上下布局">${icon(13, 13, svg`<rect y="0" width="13" height="7.500" rx="1.500" fill=${B}/><rect y="9" width="13" height="4" rx="1.500" fill=${B}/>`)}</button>
        <button class="view plain" aria-label="左右布局">${icon(13, 12, svg`<rect width="7" height="12" rx="1" fill="#8a8a8a"/><rect x="8.500" width="4" height="12" rx="1" fill="#8a8a8a"/>`)}</button>
        <label class="pct" for="zoom">100%</label>
        <button aria-label="缩小">${icon(12, 12, svg`<path d="M0 6H12" stroke="#555" stroke-width="2"/>`)}</button>
        <input id="zoom" type="range" min="0" max="100" value="34">
        <button aria-label="放大">${icon(9, 12, svg`<path d="M0 6H12M6 0V12" stroke="#444" stroke-width="2"/>`)}</button>
      </div>`;
  }
}

/* ---------- root ---------- */
@customElement("app-root")
export class AppRoot extends LitElement {
  static styles = [base, css`
    :host { display: flex; flex-direction: column; height: 100vh; overflow: hidden; background: #f4f4f4; font-family: "Noto Sans", "Noto Sans CJK SC", sans-serif; font-size: 12px; line-height: 16px; }
    .body { flex: 1; min-height: 0; display: flex; }
    .work { flex: 1; min-width: 0; display: flex; flex-direction: column; }
    .tabs { display: flex; align-items: center; height: 27px; border-bottom: 1px solid #d9d9d9; color: #000; }
    .tabs .tab { height: 26px; padding: 0 16px 0 15px; border-right: 1px solid #bfbfbf; }
    .tabs .on { background: #cce8ff; color: #4398ff; }
    .tools { margin-left: auto; display: flex; align-items: center; gap: 8px; padding-right: 12px; color: #888; }
    .tools .caret { margin-left: 4px; }
    .split { flex: 1; min-height: 0; display: flex; }
    .main { flex: 1; min-width: 0; display: flex; flex-direction: column; background: #fff; }
  `];
  render() {
    return html`
      <app-header></app-header>
      <div class="body">
        <project-panel></project-panel>
        <div class="work">
          <div class="tabs">
            ${tabs.map((t) => html`<button class="tab ${t === "分部分项" ? "on" : ""}">${t}</button>`)}
            <div class="tools">
              <button aria-label="行高">${icon(20, 14, svg`<path d="M0 5L3 1L6 5zM0 9L3 13L6 9z" fill="#888"/><path d="M3 4V10" stroke="#ccc"/><rect x="8.500" y="1" width="5" height="12" rx="1" fill="#888"/>`)}</button>
              <button aria-label="上移">${arrowShape(0, B)}</button>
              <button aria-label="下移">${arrowShape(180, "#d8d8d8")}</button>
              <button aria-label="左移">${arrowShape(-90, B)}</button>
              <button aria-label="右移">${arrowShape(90, "#d8d8d8")}</button>
              <button aria-label="列设置">${icon(22, 16, svg`<g transform="translate(7 0)"><path d="M1 0V16M6 1V5M9.500 1V5M13 1V5" stroke=${B} stroke-width="2"/><circle cx="9.500" cy="10.500" r="3" stroke=${O} stroke-width="2"/><circle cx="9.500" cy="10.500" r="4.300" stroke=${O} stroke-width="1.600" stroke-dasharray="1.900 1.500"/></g>`)}${caret}</button>
            </div>
          </div>
          <div class="split">
            <section-tree></section-tree>
            <div class="main">
              <quantity-grid></quantity-grid>
              <detail-pane></detail-pane>
            </div>
          </div>
        </div>
      </div>
      <status-bar></status-bar>`;
  }
}
